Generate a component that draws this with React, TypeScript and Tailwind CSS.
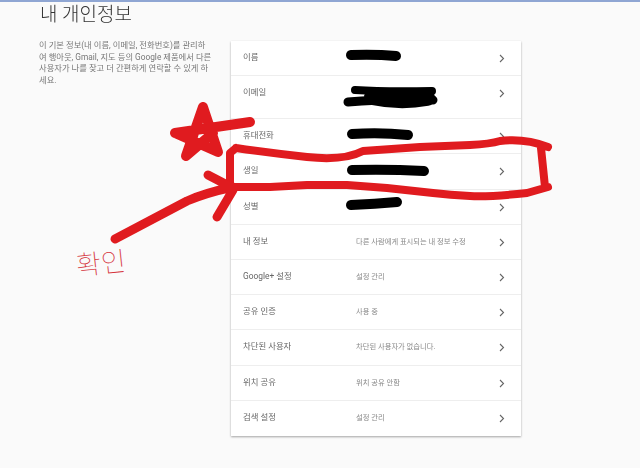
import React from "react";

const rows: { label: string; value?: string; tall?: boolean }[] = [
  { label: "이름" },
  { label: "이메일", tall: true },
  { label: "휴대전화" },
  { label: "생일" },
  { label: "성별" },
  { label: "내 정보", value: "다른 사람에게 표시되는 내 정보 수정" },
  { label: "Google+ 설정", value: "설정 관리" },
  { label: "공유 인증", value: "사용 중" },
  { label: "차단된 사용자", value: "차단된 사용자가 없습니다." },
  { label: "위치 공유", value: "위치 공유 안함" },
  { label: "검색 설정", value: "설정 관리" },
];

function Chevron() {
  return (
    <svg width="6" height="9" viewBox="0 0 6 9" fill="none" className="shrink-0">
      <path d="M1 1l3.5 3.5L1 8" stroke="#666" strokeWidth="1.1" />
    </svg>
  );
}

export default function App() {
  return (
    <div
      className="relative w-[640px] h-[468px] overflow-hidden bg-[#fafafa]"
      style={{ fontFamily: 'Roboto, "Noto Sans CJK KR", sans-serif' }}
    >
      <div className="h-[2px] bg-[#8fa6d3]" />
      <div className="blur-[0.3px]">
        <h1 className="ml-[40px] mt-[2px] h-[37px] text-[19px] leading-[22px] font-light text-[#333]">
          내 개인정보
        </h1>
        <div className="flex">
          <p className="ml-[39px] mt-[-1px] w-[192px] shrink-0 text-[8.3px] leading-[11.7px] text-[#777]">
            <span className="block whitespace-nowrap">이 기본 정보(내 이름, 이메일, 전화번호)를 관리하</span>
            <span className="block whitespace-nowrap">여 행아웃, Gmail, 지도 등의 Google 제품에서 다른</span>
            <span className="block whitespace-nowrap">사용자가 나를 찾고 더 간편하게 연락할 수 있게 하</span>
            <span className="block whitespace-nowrap">세요.</span>
          </p>
          <div className="w-[290px] bg-white shadow-[0_1px_2px_rgba(0,0,0,0.35)]">
            {rows.map((r, i) => (
              <div
                key={r.label}
                className={`flex pl-[12px] pr-[16px] pt-[11px] border-[#eeeeee] ${
                  i < rows.length - 1 ? "border-b" : ""
                } ${r.tall ? "h-[43px]" : "h-[35.2px]"}`}
              >
                <span className="w-[113px] shrink-0 text-[8.4px] leading-[11px] text-[#666]">{r.label}</span>
                <span className="flex-1 text-[7.3px] leading-[11px] text-[#888]">{r.value}</span>
                <span className="mt-[2px]">
                  <Chevron />
                </span>
              </div>
            ))}
          </div>
        </div>
      </div>

      {/* hand-drawn marks over the screenshot */}
      <svg
        className="absolute left-0 top-0 pointer-events-none"
        width="640"
        height="468"
        viewBox="0 0 640 468"
        fill="none"
        strokeLinecap="round"
        strokeLinejoin="round"
      >
        <g stroke="#000">
          <path d="M351 55q24-1 45 1" strokeWidth="10" />
          <path d="M352 134q28-2 56 1" strokeWidth="10" />
          <path d="M352 170q36-1 72 1" strokeWidth="10" />
          <path d="M351 205q24-1 46-3" strokeWidth="10" />
          <path d="M355 90q30 2 77 1" strokeWidth="8" />
          <path d="M348 102q35-3 85-2" strokeWidth="9" />
          <path d="M372 97q28 6 55 1" strokeWidth="16" />
        </g>
        <g stroke="#e01b1f">
          <path
            d="M236 148Q270 153 307 157T363 151L420 147L470 145Q490 144 500 141Q525 138 548 147M541 148L545 187M548 187L527 193Q490 197 470 196Q450 195 433 193L387 188L347 185L307 185L270 187L233 187M236 148L230 153L230 190"
            strokeWidth="8"
          />
          <path d="M115 239L187 201Q205 193 233 187M208 175L233 188M217 217L233 190" strokeWidth="9" />
          <path d="M175 133L250 122M203 107L186 156L213 133M203 107L218 152L175 133" strokeWidth="10" />
        </g>
      </svg>
      <span
        className="absolute left-[76px] top-[240px] text-[27px] leading-[44px] font-thin text-[#d5333a] -rotate-6 whitespace-nowrap"
        style={{ fontFamily: '"Noto Sans CJK KR", sans-serif' }}
      >
        확인
      </span>
    </div>
  );
}
